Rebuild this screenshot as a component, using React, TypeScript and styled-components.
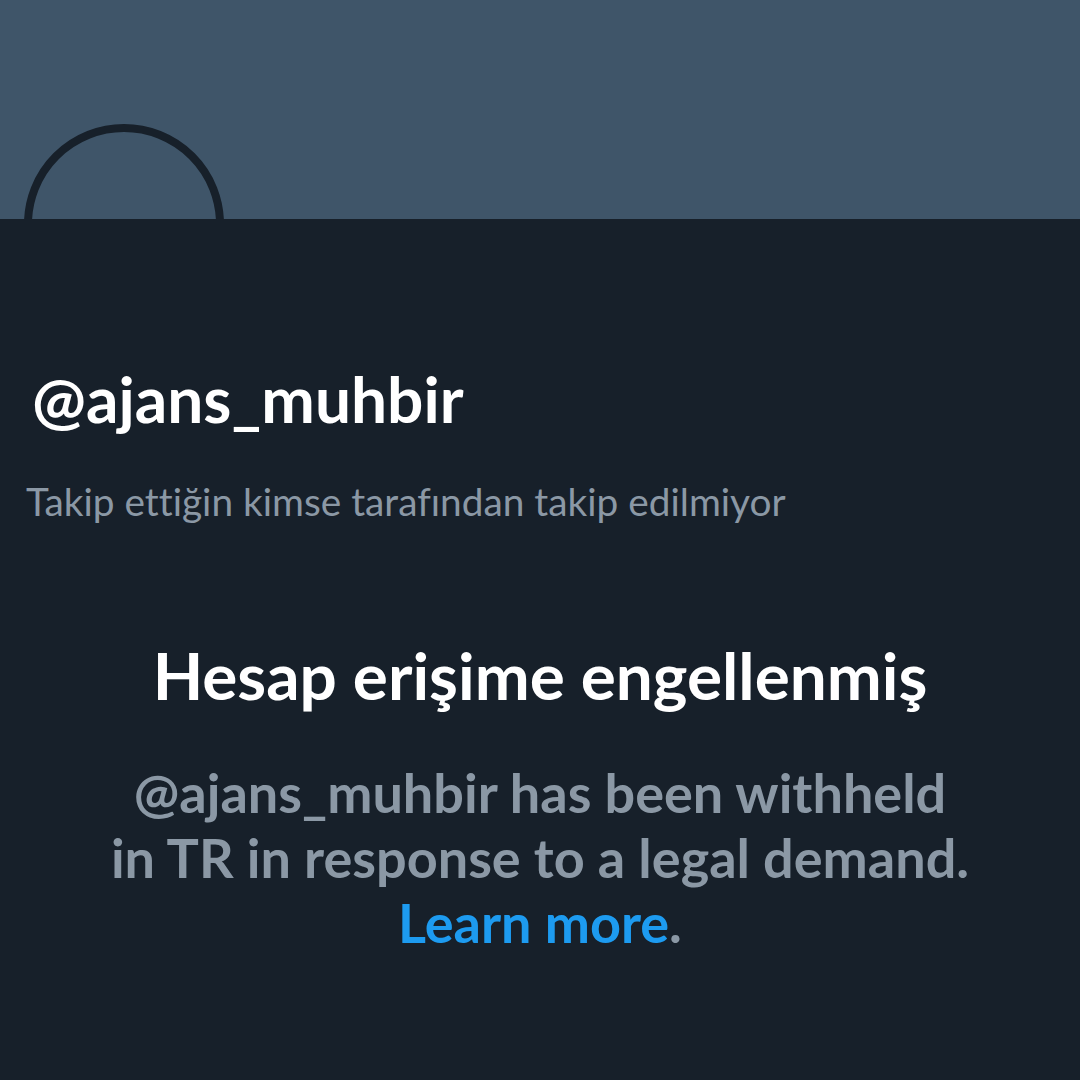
import styled, { createGlobalStyle } from "styled-components";

const GlobalStyle = createGlobalStyle`
  html, body {
    margin: 0;
    padding: 0;
    background: #17202a;
  }
  body {
    font-family: Lato, "Noto Sans", "Liberation Sans", sans-serif;
    font-variant-ligatures: none;
  }
`;

const Page = styled.div`
  width: 1080px;
  height: 1080px;
  background: #17202a;
  overflow: hidden;
`;

const Banner = styled.div`
  height: 219px;
  background: #3f5569;
`;

const Profile = styled.div`
  padding: 0 0 0 24px;
`;

const Avatar = styled.div`
  width: 200px;
  height: 200px;
  margin-top: -95px;
  box-sizing: border-box;
  border: 8px solid #17202a;
  border-radius: 50%;
  background: #3f5569;
  clip-path: inset(0 0 105px 0);
`;

const UserName = styled.h1`
  margin: 39px 0 0 8px;
  color: #ffffff;
  font-size: 64px;
  font-weight: 700;
  line-height: 72px;
`;

const FollowNote = styled.p`
  margin: 43px 0 0 2px;
  color: #8b98a5;
  font-size: 38.8px;
  font-weight: 400;
  line-height: 46px;
`;

const Notice = styled.section`
  display: flex;
  flex-direction: column;
  align-items: center;
  margin-top: 113px;
  text-align: center;
`;

const NoticeTitle = styled.h2`
  margin: 0;
  color: #ffffff;
  font-size: 65.7px;
  font-weight: 700;
  line-height: 76px;
`;

const NoticeBody = styled.p`
  margin: 47px 0 0;
  color: #8b98a5;
  font-size: 54px;
  font-weight: 700;
  line-height: 65px;
`;

const LearnMore = styled.a`
  color: #1d9bf0;
  text-decoration: none;
`;

export default function App() {
  return (
    <Page>
      <GlobalStyle />
      <Banner />
      <Profile>
        <Avatar />
        <UserName>@ajans_muhbir</UserName>
        <FollowNote>Takip ettiğin kimse tarafından takip edilmiyor</FollowNote>
      </Profile>
      <Notice>
        <NoticeTitle>Hesap erişime engellenmiş</NoticeTitle>
        <NoticeBody>
          @ajans_muhbir has been withheld
          <br />
          in TR in response to a legal demand.
          <br />
          <LearnMore href="#">Learn more</LearnMore>.
        </NoticeBody>
      </Notice>
    </Page>
  );
}
